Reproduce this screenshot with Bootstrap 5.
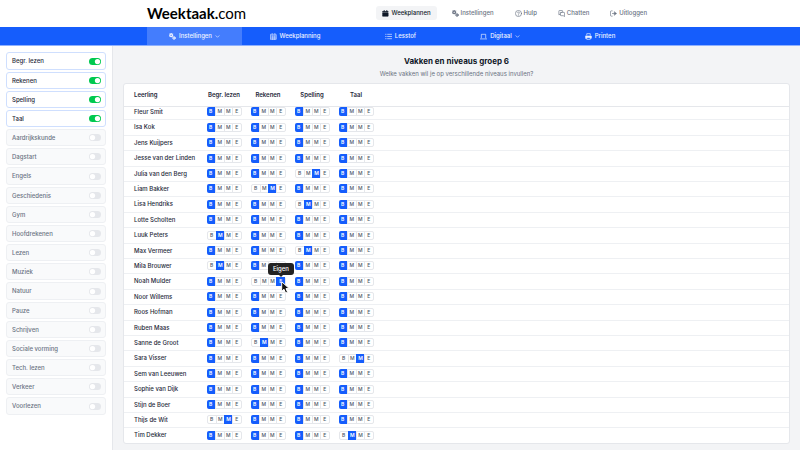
<!DOCTYPE html>
<html lang="nl">
<head>
<meta charset="utf-8">
<meta name="viewport" content="width=device-width, initial-scale=1">
<title>Weektaak.com – Vakken en niveaus</title>
<link href="https://cdn.jsdelivr.net/npm/bootstrap@5.3.0/dist/css/bootstrap.min.css" rel="stylesheet">
<style>
:root { --blue: #155dfc; --ink: #1e2939; --muted: #6a7282; --line: #e5e7eb; }
body { font-family: Inter, "Liberation Sans", sans-serif; font-size: 6px; line-height: 8px; color: var(--ink); background: #f3f4f6; }
a { text-decoration: none; }
svg { flex: none; }
.ic { width: 7px; height: 7px; fill: none; stroke: currentColor; stroke-width: 1.5; stroke-linecap: round; stroke-linejoin: round; }
.chev { width: 5px; height: 5px; }
.page-wrap { max-width: 506px; }
.top-bar { height: 27px; padding-bottom: 1px; }
.brand { font: 700 15px/20px Lato, "Open Sans", sans-serif; color: #000; }
.brand span { font-weight: 400; }
.top-menu { gap: 9px; }
.top-link { font-weight: 500; color: var(--muted); padding: 3px 6px; border-radius: 3px; gap: 2px; }
.top-link.active { color: #101828; background: #f3f4f6; }
.main-nav { background: var(--blue); border-bottom: 1px solid #8eb0fe; }
.nav-cols { display: grid; grid-template-columns: 95fr 106fr 105fr 94fr 106fr; }
.nav-cols a { height: 18px; gap: 3px; font-weight: 500; color: #eff4ff; }
.nav-cols a.active { background: #447dfd; }
.side { width: 113px; padding: 6px 6px 0 6px; border-right: 1px solid var(--line); }
.side-list { gap: 2px; }
.subject { height: 17px; padding: 0 4px 0 5px; border: 1px solid #eef0f3; border-radius: 3px; background: #f9fafb; color: var(--muted); font-weight: 500; }
.subject:nth-child(6n+1) { height: 18px; }
.subject.on { background: #fff; border-color: #cfdffe; color: var(--ink); }
.subject .form-check-input { width: 12px; height: 7px; margin: 0; border: 0; border-radius: 7px; background: #e5e7eb left center / contain no-repeat url("data:image/svg+xml,%3csvg xmlns='http://www.w3.org/2000/svg' viewBox='-4 -4 8 8'%3e%3ccircle r='3' fill='white'/%3e%3c/svg%3e"); }
.subject .form-check-input:checked { background-color: #00c950; background-position: right center; }
.content { padding: 9px 10px 7px; }
.page-title { font-size: 8px; line-height: 12px; font-weight: 700; color: #101828; margin-bottom: 3px; }
.page-sub { color: var(--muted); margin-bottom: 5px; }
.sheet { border: 1px solid var(--line); border-radius: 3px; background: #fff; }
.levels { width: 100%; table-layout: fixed; }
.levels th, .levels td { padding: 0; font-weight: 500; vertical-align: middle; }
.levels thead th { height: 22px; font-weight: 600; text-align: center; border-bottom: 1px solid var(--line); }
.levels tbody tr { height: 15px; }
.levels tbody tr:nth-child(5n+2), .levels tbody tr:nth-child(5n+4) { height: 16px; }
.levels tbody tr:first-child { height: 13px; }
.levels tbody tr:first-child > * { padding-bottom: 2px; }
.levels tbody tr + tr > * { border-top: 1px solid #eef0f3; }
.levels tr > th:first-child { padding-left: 10px; text-align: left; }
.c-name { width: 78px; }
.c-level { width: 44px; }
.pick { display: flex; width: 35px; height: 9px; margin: 0 auto; border: 1px solid var(--line); border-radius: 2px; }
.pick label { flex: 1 1 8px; font-size: 5px; line-height: 7px; text-align: center; color: #4a5565; position: relative; }
.pick label + input + label { border-left: 1px solid var(--line); }
.pick .btn-check:checked + label { background: var(--blue); color: #fff; font-weight: 600; margin: -1px 0; padding: 1px 0; border-color: var(--blue); }
.pick .btn-check:checked + label:first-of-type { margin-left: -1px; border-radius: 2px 0 0 2px; }
.tip { position: absolute; bottom: 11px; left: 50%; transform: translateX(-50%); padding: 2px 5px; border-radius: 3px; background: #222; color: #fff; font-size: 6px; line-height: 8px; font-weight: 500; z-index: 5; }
.tip::after { content: ""; position: absolute; top: 100%; left: 50%; margin-left: -2px; border: 2px solid transparent; border-top-color: #222; }
.pointer { position: absolute; left: 4px; top: 4px; width: 10px; height: 13px; z-index: 6; }
</style>
<script src="https://cdn.jsdelivr.net/npm/bootstrap@5.3.0/dist/js/bootstrap.bundle.min.js" defer></script>
</head>
<body class="d-flex flex-column min-vh-100">
<svg class="d-none" aria-hidden="true">
  <symbol id="gears" viewBox="0 0 16 16"><circle cx="5" cy="5" r="3" stroke-width="2.4"/><path d="M5 .8v1.4M5 7.8v1.4M.8 5h1.4M7.8 5h1.4M2 2l1 1M7 7l1 1M8 2 7 3M2 8l1-1"/><circle cx="11.5" cy="11.5" r="2.4" stroke-width="2.2"/><path d="M11.5 7.8V9M11.5 14v1.2M7.8 11.5H9M14 11.5h1.2"/></symbol>
  <symbol id="chevron" viewBox="0 0 16 16"><path d="m3 5.500 5 5 5-5" stroke-width="2"/></symbol>
</svg>

<header class="bg-white">
  <div class="page-wrap mx-auto">
    <div class="top-bar d-flex align-items-center justify-content-between">
      <a href="#" class="brand">Weektaak.<span>com</span></a>
      <nav class="top-menu d-flex align-items-center" aria-label="Account">
        <a href="#" class="top-link active d-flex align-items-center"><svg class="ic" viewBox="0 0 16 16"><path d="M2 7h12v7H2zM2 3.500h12v1.500H2z" fill="currentColor"/><path d="M5 1v2M11 1v2" stroke-width="2"/></svg>Weekplannen</a>
        <a href="#" class="top-link d-flex align-items-center"><svg class="ic"><use href="#gears"/></svg>Instellingen</a>
        <a href="#" class="top-link d-flex align-items-center"><svg class="ic" viewBox="0 0 16 16"><circle cx="8" cy="8" r="7"/><path d="M6 6.200C6 3.800 10 3.800 10 6.300 10 7.700 8 7.700 8 9.200M8 11.500v.3"/></svg>Hulp</a>
        <a href="#" class="top-link d-flex align-items-center"><svg class="ic" viewBox="0 0 16 16"><path d="M5.500 9.500 2 11V2.500Q2 1 3.500 1H9q1.500 0 1.500 1.500V4M7 5.500h6.500q1.500 0 1.500 1.500v8l-3-2H7q-1.500 0-1.500-1.500V7Q5.500 5.500 7 5.500z"/></svg>Chatten</a>
        <a href="#" class="top-link d-flex align-items-center"><svg class="ic" viewBox="0 0 16 16"><path d="M5 2H3Q1 2 1 4v8q0 2 2 2h2"/><path d="M5.500 8H14M10.500 4.500 14.500 8l-4 3.500z" fill="currentColor"/></svg>Uitloggen</a>
      </nav>
    </div>
  </div>
</header>

<nav class="main-nav" aria-label="Hoofdmenu">
  <div class="page-wrap mx-auto nav-cols">
    <a href="#" class="active d-flex align-items-center justify-content-center"><svg class="ic"><use href="#gears"/></svg>Instellingen<svg class="ic chev"><use href="#chevron"/></svg></a>
    <a href="#" class="d-flex align-items-center justify-content-center"><svg class="ic" viewBox="0 0 16 16"><path d="M2 3h12v12H2zM2 6.500h12M5 1v2M11 1v2M2 9.500h12M2 12.200h12M6 6.500V15M10 6.500V15" stroke-width="1.200"/></svg>Weekplanning</a>
    <a href="#" class="d-flex align-items-center justify-content-center"><svg class="ic" viewBox="0 0 16 16"><path d="M1.500 3h1M1.500 8h1M1.500 13h1M6 3h9M6 8h9M6 13h9"/></svg>Lesstof</a>
    <a href="#" class="d-flex align-items-center justify-content-center"><svg class="ic" viewBox="0 0 16 16"><path d="M3 11V3h10v8M.8 13.500h14.400"/></svg>Digitaal<svg class="ic chev"><use href="#chevron"/></svg></a>
    <a href="#" class="d-flex align-items-center justify-content-center"><svg class="ic" viewBox="0 0 16 16"><path d="M4 5V1.500h8V5"/><path d="M1.500 7h13v5h-2v-2h-9v2h-2z" fill="currentColor"/><path d="M4 10v4.500h8V10"/></svg>Printen</a>
  </div>
</nav>

<div class="d-flex flex-grow-1">
  <aside class="side bg-white flex-shrink-0"><div class="side-list d-flex flex-column" id="subjects"></div></aside>
  <main class="content flex-grow-1">
    <div class="text-center">
      <h1 class="page-title">Vakken en niveaus groep 6</h1>
      <p class="page-sub">Welke vakken wil je op verschillende niveaus invullen?</p>
    </div>
    <div class="sheet">
      <table class="levels">
        <colgroup><col class="c-name"><col class="c-level"><col class="c-level"><col class="c-level"><col class="c-level"><col></colgroup>
        <thead><tr><th scope="col">Leerling</th><th scope="col">Begr. lezen</th><th scope="col">Rekenen</th><th scope="col">Spelling</th><th scope="col">Taal</th><th></th></tr></thead>
        <tbody id="pupils"></tbody>
      </table>
    </div>
  </main>
</div>

<script>
const subjects = ["Begr. lezen", "Rekenen", "Spelling", "Taal", "Aardrijkskunde", "Dagstart", "Engels", "Geschiedenis", "Gym", "Hoofdrekenen", "Lezen", "Muziek", "Natuur", "Pauze", "Schrijven", "Sociale vorming", "Tech. lezen", "Verkeer", "Voorlezen"];
document.getElementById("subjects").innerHTML = subjects.map((s, i) =>
  `<label class="subject d-flex align-items-center justify-content-between ${i < 4 ? "on" : ""}" for="s${i}">${s}<input class="form-check-input" type="checkbox" role="switch" id="s${i}" ${i < 4 ? "checked" : ""}></label>`).join("");

// Chosen level per subject: 0 = B, 1 and 2 = M, 3 = E
const pupils = [["Fleur Smit", "0000"], ["Isa Kok", "0000"], ["Jens Kuijpers", "0000"], ["Jesse van der Linden", "0000"], ["Julia van den Berg", "0020"], ["Liam Bakker", "0200"], ["Lisa Hendriks", "0010"], ["Lotte Scholten", "0000"], ["Luuk Peters", "1000"], ["Max Vermeer", "0010"], ["Mila Brouwer", "1000"], ["Noah Mulder", "0300"], ["Noor Willems", "0000"], ["Roos Hofman", "0000"], ["Ruben Maas", "0000"], ["Sanne de Groot", "0100"], ["Sara Visser", "0002"], ["Sem van Leeuwen", "0000"], ["Sophie van Dijk", "0000"], ["Stijn de Boer", "0000"], ["Thijs de Wit", "2000"], ["Tim Dekker", "0001"]];
const overlay = `<span class="tip" role="tooltip">Eigen</span><svg class="pointer" viewBox="0 0 10 13"><path d="M.7.7v9.600l2.300-2 1.600 3.800 2-.9L5 7.600h3.300z" fill="#111" stroke="#fff" stroke-width="1"/></svg>`;
document.getElementById("pupils").innerHTML = pupils.map(([name, lv], r) =>
  `<tr><th scope="row">${name}</th>${[...lv].map((v, c) =>
    `<td><div class="pick" role="group" aria-label="${subjects[c]}">${[..."BMME"].map((t, k) =>
      `<input type="radio" class="btn-check" name="p${r}-${c}" id="p${r}-${c}-${k}" ${k == v ? "checked" : ""}><label for="p${r}-${c}-${k}">${t}${v == 3 && k == 3 ? overlay : ""}</label>`).join("")}</div></td>`).join("")}<td></td></tr>`).join("");
</script>
</body>
</html>
